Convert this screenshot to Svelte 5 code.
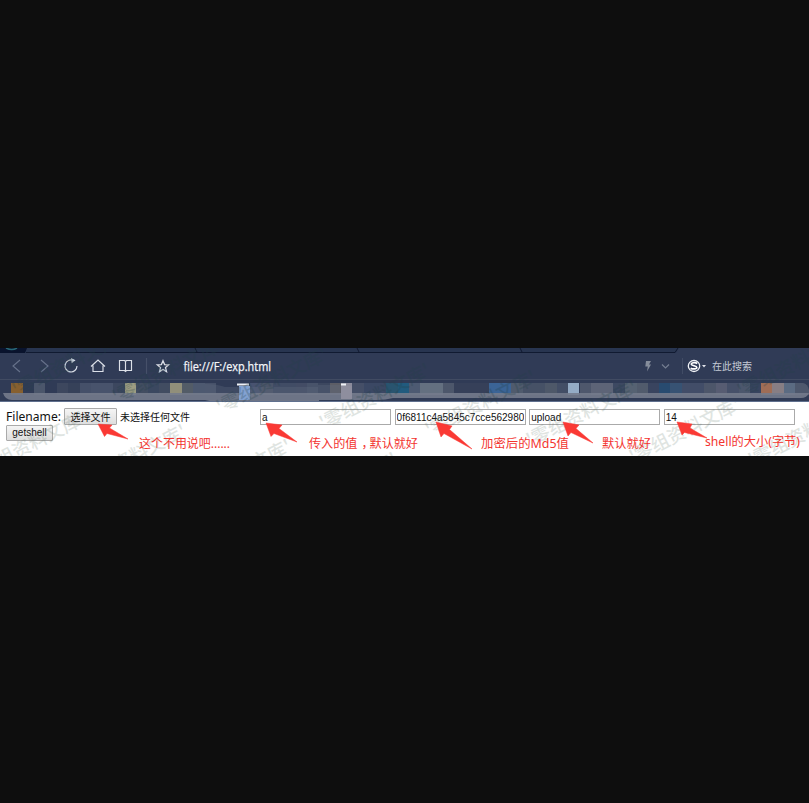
<script>
  const tiles = [
    [11, 12, '#87602f'], [34, 11, '#4b566b'], [57, 11, '#3d475e'], [68, 12, '#364159'],
    [80, 11, '#455069'], [91, 22, '#48536c'], [113, 12, '#3c475f'], [125, 11, '#9d9d82'],
    [136, 12, '#424d61'], [148, 11, '#3b4860'], [159, 11, '#414c61'], [170, 12, '#918f7a'],
    [182, 11, '#535c67'], [193, 12, '#4d5970'], [205, 11, '#465169'], [250, 11, '#485370'],
    [261, 12, '#4c5569'], [273, 23, '#414c65'], [296, 11, '#434c65'], [307, 11, '#48536a'],
    [318, 12, '#3c475f'], [330, 11, '#5c5d66'], [341, 11, '#8b8b9b'], [352, 12, '#454f67'],
    [364, 22, '#3b4864'], [386, 12, '#29546f'], [398, 11, '#215b7e'], [409, 11, '#4d5a72'],
    [420, 23, '#647080'], [443, 11, '#4d576b'], [454, 35, '#364059'], [489, 22, '#3b6496'],
    [511, 12, '#505b6d'], [523, 22, '#465166'], [545, 12, '#4e5869'], [557, 11, '#434e66'],
    [568, 11, '#94abc5'], [580, 11, '#4e576c'], [591, 22, '#5d6477'], [613, 12, '#3d4962'],
    [625, 12, '#566272'], [637, 11, '#515b6c'], [648, 11, '#39445f'], [659, 11, '#284b70'],
    [670, 12, '#375273'], [682, 22, '#424d68'], [704, 12, '#4d566a'], [716, 11, '#575c72'],
    [727, 12, '#465069'], [739, 11, '#4c576d'], [750, 11, '#38445f'], [761, 11, '#9f6d56'],
    [772, 12, '#877e84'], [784, 11, '#5b6b82']
  ];
  const marks = [
    [30, 445], [131, 458], [236, 473], [272, 381], [375, 397], [342, 486],
    [481, 404], [582, 414], [685, 431], [804, 434], [168, 371], [68, 364], [793, 365]
  ];
  // A full-width comma sits in the middle of its cell.
  const shift = (text) => [...text].map((c, i, all) => (c === '，' ? 4 : all[i - 1] === '，' ? -4 : 0)).join(' ');
  const notes = [
    [139, 448, 91, '这个不用说吧......'], [309, 448, 109, '传入的值，默认就好'],
    [481, 448, 88, '加密后的Md5值'], [602, 448, 49, '默认就好'],
    [705, 446, 95, 'shell的大小(字节)']
  ];
  const arrows = [
    'M98 424L112 425L109.5 428L128 439L107 433.5L104.5 436.5Z',
    'M266 423L282 425L279 428.5L297 442L274 433.5L271 436.5Z',
    'M436 422L452 426L449.5 429.5L472 449L444 433.5L441 437Z',
    'M563 422L579 425L576 428.5L593 443L571 432.5L568 436Z',
    'M677 422L692 424L690 428L707 438L684.5 432.5L682 435Z'
  ];
</script>

<main>
  <section class="browser">
    <div class="tabs">
      <svg width="809" height="5" viewBox="0 0 809 5">
        <path d="M0 0H27L25 5H0Z" fill="#09132d" />
        <path d="M6 0q6 3 11 0" fill="none" stroke="#286775" stroke-width="1.5" />
        <path d="M26 4.5H675L678 0M195 0l2.5 5M357 0l2.5 5M520 0l2.5 5" fill="none" stroke="#101a31" />
        <path d="M679 0H809V5H676Z" fill="#303b56" />
      </svg>
    </div>
    <div class="toolbar">
      <svg class="nav" width="176" height="26" viewBox="0 353 176 26" fill="none" stroke="#dce0e8" stroke-width="1.15">
        <path d="M20 360l-7 6 7 6M41 360l7 6-7 6" stroke="#66718a" />
        <path d="M73.5 360.5A6 6 0 1 0 77 366" />
        <path d="M71 358l4.5 2.2-3.8 3z" fill="#dce0e8" stroke="none" />
        <path d="M91 366.5l7-6.5 7 6.5M93 365.5v6h10v-6" />
        <path d="M119.5 360.5h5l1 1 1-1h5v10h-5l-1 1-1-1h-5zM125.5 361v10" />
        <path d="M146.5 358v16" stroke="#465069" />
        <path d="M163 360.8l1.6 3.8 4.1.3-3.2 2.7 1 4-3.5-2.2-3.5 2.2 1-4-3.2-2.7 4.1-.3z" stroke-width="1.3" />
      </svg>
      <svg class="url" width="464" height="26"><text x="7.5" y="18" textLength="87.5" lengthAdjust="spacingAndGlyphs">file:///F:/exp.html</text></svg>
      <svg class="tools" width="72" height="26" viewBox="640 353 72 26">
        <path d="M646 361h5l-2 3.5h2l-4 7 .8-5h-2.5z" fill="#858d9b" />
        <path d="M662 364.5l3.5 3.5 3.5-3.5" fill="none" stroke="#747e91" stroke-width="1.2" />
        <path d="M682.5 358v16" stroke="#414c65" />
        <ellipse cx="694" cy="366" rx="5.7" ry="5.5" fill="none" stroke="#f1f3f7" stroke-width="1.3" />
        <path d="M697.3 363.4c-2-1.2-6-.8-6 .8s5.5 1.5 5.5 3.2-4 2-6.2.8" fill="none" stroke="#fff" stroke-width="1.7" />
        <path d="M702 365h4l-2 2.5z" fill="#e1e4eb" />
      </svg>
      <span class="search">在此搜索</span>
    </div>
    <div class="bookmarks">
      <svg width="809" height="23" viewBox="0 379 809 23">
        <path d="M0 379.5H809" stroke="#414b62" />
        {#each tiles as [x, w, color]}
          <rect {x} y="383" width={w} height="12" fill={color} />
        {/each}
        <path d="M795 383h8q5 1 6 7v5h-14z" fill="#4e586d" />
        <path d="M205 384q12 0 20 3h93v-2h22v10H205z" fill="#626d80" opacity=".3" />
        <path d="M3 393H809Q807 398 801 398H393Q386 400 377 400H319V401H225Q215 403 205 400H12Q5 400 3 393Z" fill="#747b8c" opacity=".9" />
        <rect x="239" y="386" width="11" height="14" fill="#83a2d2" />
        <rect x="341" y="386" width="11" height="13" fill="#8e8e9e" />
        <path d="M237 384.5h12M341 384.5h5" stroke="#eef1f6" stroke-width="2" />
        <path d="M0 401.5H809" stroke="#60708e" />
      </svg>
    </div>
    <div class="page">
      <form onsubmit={(e) => e.preventDefault()}>
        <div class="row">
          <label for="value"><svg width="58" height="20"><text x="0" y="14" textLength="55" lengthAdjust="spacingAndGlyphs">Filename:</text></svg></label>
          <button class="choose" type="button">选择文件</button>
          <span class="empty">未选择任何文件</span>
          <input id="value" value="a" />
          <input value="0f6811c4a5845c7cce562980" />
          <input value="upload" />
          <input value="14" />
        </div>
        <button class="submit">getshell</button>
      </form>
    </div>
    <svg class="overlay" width="809" height="108" viewBox="0 348 809 108">
      <clipPath id="chrome-area"><rect x="0" y="348" width="809" height="54" /></clipPath>
      <clipPath id="page-area"><rect x="0" y="402" width="809" height="54" /></clipPath>
      {#each ['dark', 'light'] as area}
        <g class="watermark {area}" clip-path="url(#{area === 'dark' ? 'chrome' : 'page'}-area)">
          {#each marks.filter(([, y]) => area === 'light' ? y > 375 : y < 420) as [x, y]}
            <text {x} y={y + 6} transform="rotate(-27 {x} {y})">'零组资料文库'</text>
          {/each}
        </g>
      {/each}
      <g fill="#fa3934" stroke="#fa3934" stroke-width=".5">
        {#each arrows as d}<path {d} />{/each}
      </g>
      <g class="notes">
        {#each notes as [x, y, w, text]}
          <text {x} {y} dx={shift(text)} textLength={w} lengthAdjust="spacingAndGlyphs">{text}</text>
        {/each}
      </g>
    </svg>
  </section>
</main>

<style>
  :global(body) { background: #0e0e0e; overflow: hidden; }
  main { height: 803px; padding-top: 348px; box-sizing: border-box; background: #0e0e0e; font-family: "Noto Sans", "Noto Sans CJK SC", sans-serif; }
  svg { display: block; flex-shrink: 0; }
  .browser { position: relative; height: 108px; overflow: hidden; background: #303b56; }
  .tabs { height: 5px; background: #283550; }
  .toolbar { height: 26px; display: flex; align-items: center; color: #f2f4f8; }
  .url { font: 12px "Open Sans", sans-serif; fill: #f5f7fa; stroke: #f5f7fa; stroke-width: .25px; }
  .search { font: 10px/26px "Noto Sans CJK SC", sans-serif; color: #c6cbd5; }
  .bookmarks { height: 23px; }
  .page { height: 54px; background: #fff; }
  form { padding: 6px 0 0 6px; }
  .row { height: 17px; display: flex; align-items: center; }
  label { width: 58px; }
  label text { font: 13px "Noto Sans", sans-serif; fill: #111; }
  button { box-sizing: border-box; padding: 0; border: 1px solid #aaa; border-radius: 1px; background: linear-gradient(#f5f5f5, #dedede); color: #111; }
  .choose { width: 53px; height: 17px; font: 10px/14px "Noto Sans CJK SC", sans-serif; }
  .empty { width: 140px; padding-left: 3px; font: 10px/16px "Noto Sans CJK SC", sans-serif; color: #111; }
  input { box-sizing: border-box; width: 131px; height: 16px; margin: 1px 3.6px 0 0; padding: 0 1px; border: 1px solid #aaa; border-radius: 0; background: #fff; color: #111; font: 10px/14px "Liberation Sans", sans-serif; }
  .submit { display: block; width: 47px; height: 16px; font: 10px/14px "Liberation Sans", sans-serif; }
  .overlay { position: absolute; inset: 0; pointer-events: none; }
  .watermark { font: 500 18.4px "Noto Sans CJK SC", sans-serif; text-anchor: middle; }
  .dark { fill: #234047; opacity: .25; }
  .light { fill: #567060; opacity: .18; }
  .notes { font: 12px "Noto Sans", "Noto Sans CJK SC", sans-serif; fill: #f3342f; }
</style>
